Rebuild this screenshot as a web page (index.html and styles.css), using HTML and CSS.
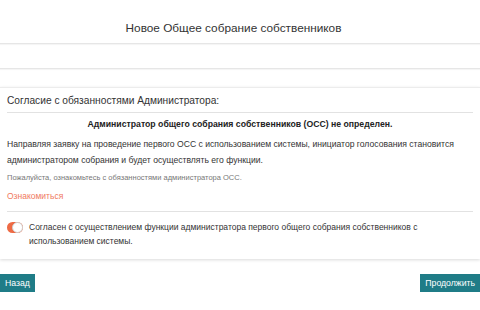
FILE: index.html
```html
<!DOCTYPE html>
<html lang="ru">
<head>
<meta charset="utf-8">
<link rel="stylesheet" href="styles.css">
</head>
<body>
<header class="topbar">
  <h1 class="title">Новое Общее собрание собственников</h1>
</header>
<div class="strip"></div>
<main class="card">
  <div class="card-head">Согласие с обязанностями Администратора:</div>
  <div class="card-body">
    <p class="notice">Администратор общего собрания собственников (ОСС) не определен.</p>
    <p class="text">Направляя заявку на проведение первого ОСС с использованием системы, инициатор голосования становится администратором собрания и будет осуществлять его функции.</p>
    <p class="hint">Пожалуйста, ознакомьтесь с обязанностями администратора ОСС.</p>
    <a class="link">Ознакомиться</a>
  </div>
  <div class="agree">
    <span class="toggle"><span class="knob"></span></span>
    <span class="agree-text">Согласен с осуществлением функции администратора первого общего собрания собственников с использованием системы.</span>
  </div>
</main>
<div class="actions">
  <button class="btn">Назад</button>
  <button class="btn">Продолжить</button>
</div>
</body>
</html>
```
FILE: styles.css
```css
* { box-sizing: border-box; }
html, body { margin: 0; padding: 0; }
body {
  width: 480px;
  height: 310px;
  overflow: hidden;
  background: #fff;
  font-family: "Liberation Sans", Arial, sans-serif;
  color: #333;
}
.topbar {
  height: 44px;
  display: flex;
  align-items: center;
  justify-content: center;
  padding-right: 13px;
  border-bottom: 1px solid #e6e6e6;
  box-shadow: 0 1px 1px rgba(0,0,0,0.04);
}
.title {
  margin: 13px 0 0 0;
  font-size: 11.8px;
  font-weight: normal;
  color: #333;
}
.strip {
  height: 25px;
  border-bottom: 1px solid #e6e6e6;
  box-shadow: 0 1px 1px rgba(0,0,0,0.04);
}
.card {
  margin-top: 18px;
  background: #fff;
  box-shadow: 0 1px 3px rgba(0,0,0,0.15);
  border-top: 1px solid #ececec;
  padding: 0 7px 11px;
}
.card-head {
  font-size: 10.2px;
  color: #333;
  padding: 7px 0 6px;
  border-bottom: 1px solid #e2e2e2;
}
.card-body {
  padding: 0 0 10px;
  border-bottom: 1px solid #e2e2e2;
}
.notice {
  margin: 6px 0 0;
  text-align: center;
  font-weight: bold;
  font-size: 8.7px;
  color: #222;
}
.text {
  margin: 7px 0 0;
  font-size: 8.6px;
  line-height: 16px;
  color: #333;
}
.hint {
  margin: 5px 0 0;
  font-size: 7.5px;
  color: #777;
}
.link {
  display: block;
  margin-top: 9px;
  font-size: 8.5px;
  color: #f07a5e;
}
.agree {
  display: flex;
  align-items: flex-start;
  gap: 6px;
  padding-top: 8px;
}
.toggle {
  flex: none;
  width: 16px;
  height: 11px;
  margin-top: 2px;
  border-radius: 6px;
  background: #ee6b45;
  position: relative;
}
.knob {
  position: absolute;
  right: 0;
  top: 0;
  width: 11px;
  height: 11px;
  border-radius: 50%;
  background: #fff;
  border: 1px solid #d0d0d0;
}
.agree-text {
  font-size: 8.5px;
  line-height: 14px;
  color: #333;
}
.actions {
  display: flex;
  justify-content: space-between;
  margin-top: 15px;
}
.btn {
  height: 18px;
  padding: 0 5px;
  border: none;
  background: #1f7c87;
  color: #fff;
  font-family: "Liberation Sans", Arial, sans-serif;
  font-size: 8.7px;
}
```
